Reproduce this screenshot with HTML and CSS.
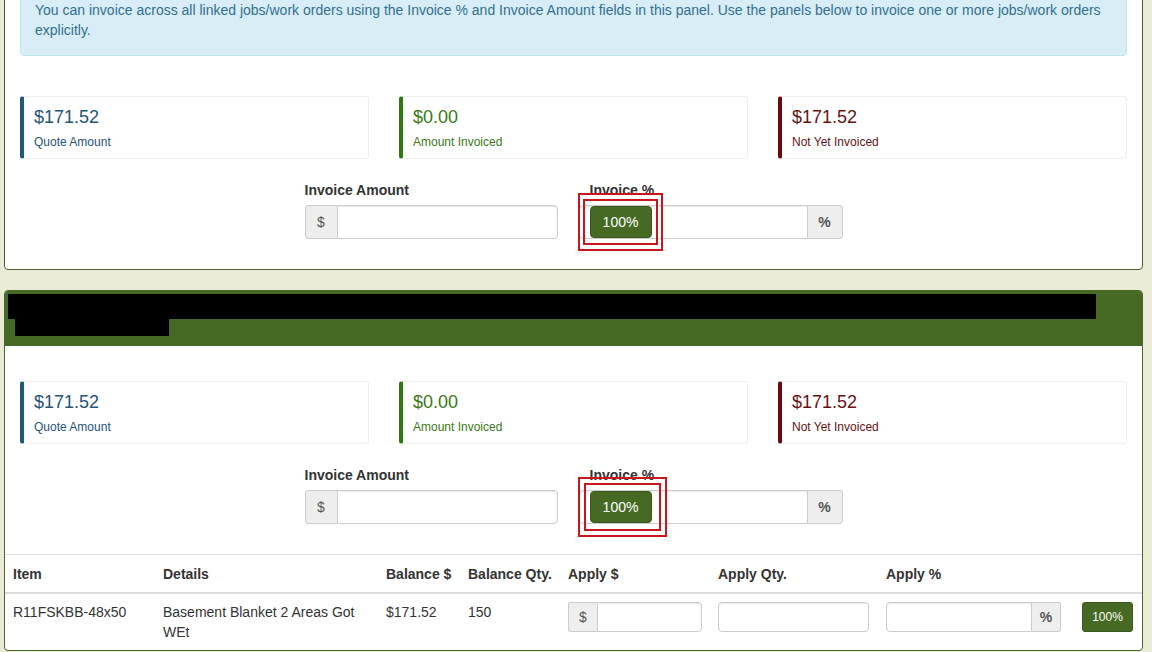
FILE: index.html
```html
<!DOCTYPE html>
<html lang="en">
<head>
    <meta charset="UTF-8">
    <meta name="viewport" content="width=device-width, initial-scale=1.0">
    <title>Invoice Jobs</title>
    <link rel="stylesheet" href="styles.css">
</head>
<body>
<div class="page">

    <div class="panel panel-top">
        <div class="panel-body">
            <div class="alert">
                You can invoice across all linked jobs/work orders using the Invoice % and Invoice Amount fields in this panel. Use the panels below to invoice one or more jobs/work orders explicitly.
            </div>

            <div class="stats">
                <div class="stat stat-quote">
                    <div class="stat-value">$171.52</div>
                    <div class="stat-label">Quote Amount</div>
                </div>
                <div class="stat stat-invoiced">
                    <div class="stat-value">$0.00</div>
                    <div class="stat-label">Amount Invoiced</div>
                </div>
                <div class="stat stat-open">
                    <div class="stat-value">$171.52</div>
                    <div class="stat-label">Not Yet Invoiced</div>
                </div>
            </div>

            <div class="invoice-row">
                <div class="form-group amount-group">
                    <label>Invoice Amount</label>
                    <div class="input-group">
                        <span class="addon">$</span>
                        <input type="text" class="field">
                    </div>
                </div>
                <div class="form-group pct-group">
                    <label>Invoice %</label>
                    <div class="input-group">
                        <input type="text" class="field">
                        <span class="addon addon-bold">%</span>
                        <button class="btn-full">100%</button>
                        <span class="mark mark-outer"></span>
                        <span class="mark mark-inner"></span>
                    </div>
                </div>
            </div>
        </div>
    </div>

    <div class="panel panel-job">
        <div class="panel-heading">
            <span class="redact redact-1"></span>
            <span class="redact redact-2"></span>
        </div>
        <div class="panel-body">
            <div class="stats">
                <div class="stat stat-quote">
                    <div class="stat-value">$171.52</div>
                    <div class="stat-label">Quote Amount</div>
                </div>
                <div class="stat stat-invoiced">
                    <div class="stat-value">$0.00</div>
                    <div class="stat-label">Amount Invoiced</div>
                </div>
                <div class="stat stat-open">
                    <div class="stat-value">$171.52</div>
                    <div class="stat-label">Not Yet Invoiced</div>
                </div>
            </div>

            <div class="invoice-row">
                <div class="form-group amount-group">
                    <label>Invoice Amount</label>
                    <div class="input-group">
                        <span class="addon">$</span>
                        <input type="text" class="field">
                    </div>
                </div>
                <div class="form-group pct-group pct-group-2">
                    <label>Invoice %</label>
                    <div class="input-group">
                        <input type="text" class="field">
                        <span class="addon addon-bold">%</span>
                        <button class="btn-full">100%</button>
                        <span class="mark mark-outer"></span>
                        <span class="mark mark-inner"></span>
                    </div>
                </div>
            </div>
        </div>

        <table class="items">
            <colgroup>
                <col class="c-item">
                <col class="c-details">
                <col class="c-bal">
                <col class="c-qty">
                <col class="c-apply">
                <col class="c-apply-qty">
                <col class="c-apply-pct">
                <col class="c-btn">
            </colgroup>
            <thead>
                <tr>
                    <th>Item</th>
                    <th>Details</th>
                    <th>Balance $</th>
                    <th>Balance Qty.</th>
                    <th>Apply $</th>
                    <th>Apply Qty.</th>
                    <th>Apply %</th>
                    <th></th>
                </tr>
            </thead>
            <tbody>
                <tr>
                    <td>R11FSKBB-48x50</td>
                    <td>Basement Blanket 2 Areas Got WEt</td>
                    <td>$171.52</td>
                    <td>150</td>
                    <td>
                        <div class="input-group input-sm w-apply">
                            <span class="addon">$</span>
                            <input type="text" class="field">
                        </div>
                    </td>
                    <td>
                        <div class="input-group input-sm w-qty">
                            <input type="text" class="field">
                        </div>
                    </td>
                    <td>
                        <div class="input-group input-sm w-pct">
                            <input type="text" class="field">
                            <span class="addon addon-bold">%</span>
                        </div>
                    </td>
                    <td><button class="btn-small">100%</button></td>
                </tr>
            </tbody>
        </table>
    </div>

</div>
</body>
</html>
```

FILE: styles.css
```css
body {
    margin: 0;
    background-color: #e9ebd7;
    font-family: "Liberation Sans", Arial, sans-serif;
    font-size: 14px;
    line-height: 20px;
    color: #333;
}
.page {
    width: 1139px;
    padding-left: 4px;
}

/* Panels */
.panel {
    background-color: #fff;
    border: 1px solid #4e5d30;
    border-radius: 4px;
    margin-bottom: 20px;
}
.panel-top {
    margin-top: -32px;
}
.panel-job {
    border-color: #466a24;
    overflow: hidden;
}
.panel-body {
    padding: 15px 15px 0 15px;
}
.panel-heading {
    background-color: #466a24;
    padding: 3px 3px 10px 3px;
}
.redact {
    display: block;
    background-color: #000;
}
.redact-1 {
    width: 1088px;
    height: 25px;
}
.redact-2 {
    width: 154px;
    height: 17px;
    margin-left: 7px;
}

/* Info alert */
.alert {
    background-color: #d9edf7;
    border: 1px solid #bce8f1;
    border-radius: 4px;
    color: #31708f;
    padding: 15px 14px;
    margin-bottom: 40px;
}
.panel-job .panel-body {
    padding-top: 35px;
}

/* Stat boxes */
.stats {
    display: grid;
    grid-template-columns: repeat(3, 1fr);
    column-gap: 30px;
}
.stat {
    height: 63px;
    box-sizing: border-box;
    border: 1px solid #eee;
    border-left: 4px solid;
    border-radius: 3px;
    padding: 8px 10px 0 10px;
}
.stat-value {
    font-size: 18px;
    line-height: 24px;
}
.stat-label {
    font-size: 12px;
    line-height: 18px;
    margin-top: 4px;
}
.stat-quote {
    border-left-color: #1d5a7c;
    color: #245477;
}
.stat-invoiced {
    border-left-color: #2e7a0f;
    color: #3a7a16;
}
.stat-open {
    border-left-color: #6a0b0b;
    color: #6a1212;
}

/* Invoice amount / percent */
.invoice-row {
    display: flex;
    justify-content: center;
    gap: 21px;
    margin-top: 21px;
}
.form-group {
    margin-bottom: 30px;
}
.form-group label {
    display: block;
    font-weight: bold;
    margin-bottom: 5px;
}
.amount-group {
    width: 253px;
}
.pct-group {
    width: 264px;
}
.pct-group label {
    padding-left: 11px;
}
.input-group {
    display: flex;
    height: 34px;
    position: relative;
}
.addon {
    display: flex;
    align-items: center;
    justify-content: center;
    width: 31px;
    background-color: #eee;
    border: 1px solid #ccc;
    color: #555;
}
.addon:first-child {
    border-right: 0;
    border-radius: 4px 0 0 4px;
}
.addon:not(:first-child) {
    width: 34px;
    border-left: 0;
    border-radius: 0 4px 4px 0;
}
.addon-bold {
    font-weight: bold;
}
.field {
    flex: 1;
    min-width: 0;
    margin: 0;
    border: 1px solid #ccc;
    border-radius: 4px;
    padding: 0 10px;
    font: inherit;
    box-shadow: inset 0 1px 1px rgba(0, 0, 0, 0.075);
}
.addon + .field {
    border-radius: 0 4px 4px 0;
}
.field:not(:last-child) {
    border-radius: 4px 0 0 4px;
}
.input-group .field:only-child {
    border-radius: 4px;
}

.btn-full {
    position: absolute;
    left: 11px;
    top: 1px;
    width: 62px;
    height: 32px;
    background-color: #466a24;
    border: 1px solid #3a581d;
    border-radius: 4px;
    color: #fff;
    font: inherit;
}
.mark {
    position: absolute;
    border: 2px solid #c8161d;
    pointer-events: none;
}
.mark-outer {
    left: -1px;
    top: -12px;
    width: 81px;
    height: 54px;
}
.mark-inner {
    left: 4px;
    top: -6px;
    width: 71px;
    height: 42px;
}
.pct-group-2 .mark-outer {
    top: -13px;
    width: 85px;
    height: 56px;
}
.pct-group-2 .mark-inner {
    left: 5px;
    top: -7px;
    width: 73px;
    height: 44px;
}

/* Items table */
.items {
    width: 100%;
    border-collapse: collapse;
    table-layout: fixed;
    border-top: 1px solid #ddd;
}
.items th,
.items td {
    padding: 8px;
    text-align: left;
    vertical-align: top;
}
.items th {
    font-weight: bold;
    padding-top: 9px;
    padding-bottom: 8px;
    border-bottom: 2px solid #ddd;
}
.c-item { width: 150px; }
.c-details { width: 223px; }
.c-bal { width: 82px; }
.c-qty { width: 100px; }
.c-apply { width: 150px; }
.c-apply-qty { width: 168px; }
.c-apply-pct { width: 196px; }
.c-btn { width: 68px; }

.input-sm {
    height: 30px;
    font-size: 12px;
}
.input-sm .addon {
    width: 28px;
    font-size: 14px;
    border-radius: 3px 0 0 3px;
}
.input-sm .addon:not(:first-child) {
    border-radius: 0 3px 3px 0;
}
.w-apply { width: 134px; }
.w-qty { width: 151px; }
.w-pct { width: 175px; }
.btn-small {
    width: 51px;
    height: 30px;
    background-color: #466a24;
    border: 1px solid #3a581d;
    border-radius: 3px;
    color: #fff;
    font-family: inherit;
    font-size: 12px;
}
```
